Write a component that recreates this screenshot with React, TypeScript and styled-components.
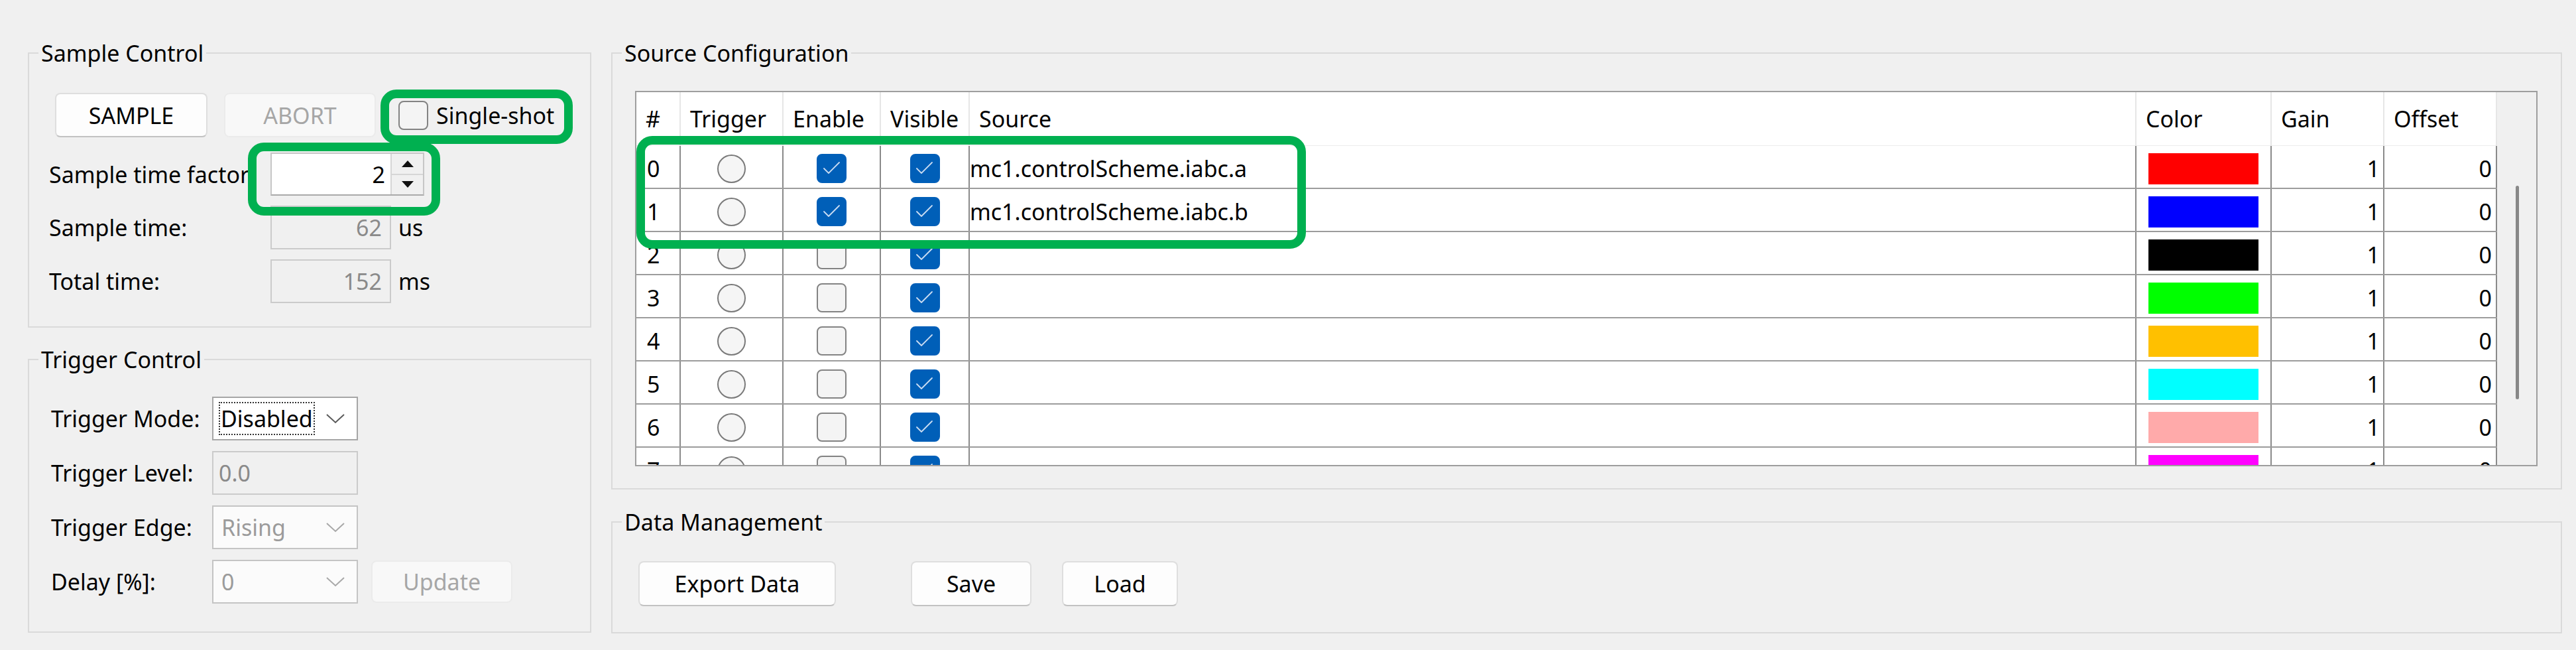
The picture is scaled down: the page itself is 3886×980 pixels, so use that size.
import React from 'react';
import styled, { createGlobalStyle, css } from 'styled-components';

const GlobalStyle = createGlobalStyle`
  html, body { margin: 0; padding: 0; background: #f0f0f0; }
  body {
    font-family: "Noto Sans", "Open Sans", sans-serif;
    font-size: 34px;
    color: #000;
    overflow: hidden;
  }
  * { box-sizing: border-box; }
`;

const Page = styled.div`
  position: relative;
  width: 3886px;
  height: 980px;
  display: flex;
  align-items: flex-start;
  gap: 30px;
  padding: 60px 21px 0 42px;
  background: #f0f0f0;
`;

const Column = styled.div<{ $width: number; $gap: number }>`
  width: ${p => p.$width}px;
  display: flex;
  flex-direction: column;
  gap: ${p => p.$gap}px;
  flex: none;
`;

const Group = styled.fieldset<{ $height: number; $top: number }>`
  margin: 0;
  min-width: 0;
  height: ${p => p.$height}px;
  border: 2px solid #dadada;
  padding: ${p => p.$top}px 0 0 0;
`;

const GroupBody = styled.div<{ $indent: number }>`
  padding-left: ${p => p.$indent}px;
`;

const Legend = styled.legend`
  margin-left: 14px;
  padding: 0 4px;
  font-size: 34px;
  line-height: 40px;
  color: #000;
`;

/* ---------- buttons ---------- */
const PushButton = styled.button<{ $w: number; $h?: number; $after?: number }>`
  width: ${p => p.$w}px;
  height: ${p => p.$h ?? 67}px;
  margin-right: ${p => p.$after ?? 0}px;
  flex: none;
  font-family: inherit;
  font-size: 34px;
  color: #000;
  background: #fdfdfd;
  border: 2px solid #dedede;
  border-bottom-color: #c2c2c2;
  border-radius: 8px;
  padding: 0;
  &:disabled {
    color: #a6a6a6;
    background: #f8f8f8;
    border-color: #ebebeb;
  }
`;

const ButtonRow = styled.div<{ $gap: number; $indent: number }>`
  display: flex;
  align-items: center;
  gap: ${p => p.$gap}px;
  padding-left: ${p => p.$indent}px;
`;

const CheckLabel = styled.label`
  display: flex;
  align-items: center;
  gap: 12px;
  margin-left: 9px;
`;

const Box = styled.span<{ $checked?: boolean }>`
  width: 45px;
  height: 44px;
  flex: none;
  border-radius: 8px;
  display: flex;
  align-items: center;
  justify-content: center;
  ${p =>
    p.$checked
      ? css`
          background: #005fb8;
          border: 2px solid #005fb8;
        `
      : css`
          background: #f4f4f4;
          border: 2px solid #838383;
        `}
`;

const Radio = styled.span`
  width: 43px;
  height: 43px;
  border-radius: 50%;
  border: 2px solid #7a7a7a;
  background: #f5f5f5;
`;

/* ---------- form rows ---------- */
const FormGrid = styled.div<{ $label: number; $gap: number; $top: number }>`
  display: grid;
  grid-template-columns: ${p => p.$label}px max-content;
  row-gap: ${p => p.$gap}px;
  align-items: center;
  margin-top: ${p => p.$top}px;
`;

const Label = styled.span`
  white-space: nowrap;
  line-height: 40px;
`;

const ControlCell = styled.div`
  display: flex;
  align-items: center;
`;

const Unit = styled.span`
  margin-left: 11px;
`;

const SpinBox = styled.div`
  width: 232px;
  height: 65px;
  display: flex;
  border: 2px solid #c6c6c6;
  border-bottom-color: #a9a9a9;
  background: #fff;
`;

const SpinValue = styled.div`
  flex: 1;
  display: flex;
  align-items: center;
  justify-content: flex-end;
  padding-right: 8px;
`;

const SpinButtons = styled.div`
  width: 49px;
  display: flex;
  flex-direction: column;
  border-left: 2px solid #d6d6d6;
  background: #f0f0f0;
`;

const SpinHalf = styled.div<{ $top?: boolean }>`
  flex: 1;
  display: flex;
  align-items: center;
  justify-content: center;
  ${p => p.$top && 'border-bottom: 2px solid #d6d6d6;'}
`;

const Field = styled.div<{ $w: number; $align: 'left' | 'right' }>`
  width: ${p => p.$w}px;
  height: 66px;
  display: flex;
  align-items: center;
  justify-content: ${p => (p.$align === 'right' ? 'flex-end' : 'flex-start')};
  padding: 0 ${p => (p.$align === 'right' ? '12px' : '0')} 0 ${p => (p.$align === 'left' ? '8px' : '0')};
  border: 2px solid #cbcbcb;
  background: #f0f0f0;
  color: #8a8a8a;
`;

const Combo = styled.div<{ $disabled?: boolean }>`
  width: 220px;
  height: 66px;
  display: flex;
  align-items: center;
  justify-content: space-between;
  padding: 0 18px 0 10px;
  border: 2px solid ${p => (p.$disabled ? '#c4c4c4' : '#a6a6a6')};
  background: ${p => (p.$disabled ? '#fbfbfb' : '#fff')};
  color: ${p => (p.$disabled ? '#9b9b9b' : '#000')};
`;

const FocusText = styled.span`
  display: flex;
  align-items: center;
  height: 46px;
  padding: 0 1px;
  outline: 2px dotted #333;
  outline-offset: 0;
`;

const PlainText = styled.span`
  padding-left: 2px;
`;

const UpdateWrap = styled.div`
  margin-left: 20px;
`;

/* ---------- table ---------- */
const COLS = '67px 155px 147px 134px 1760px 204px 170px 170px';

const TableFrame = styled.div`
  width: 2870px;
  height: 566px;
  display: flex;
  border: 2px solid #9e9e9e;
  background: #f0f0f0;
`;

const TableMain = styled.div`
  width: 2807px;
  display: flex;
  flex-direction: column;
  overflow: hidden;
`;

const HeaderRow = styled.div`
  display: grid;
  grid-template-columns: ${COLS};
  height: 81px;
  flex: none;
  background: #fff;
  border-bottom: 1px solid #ededed;
`;

const HeaderCell = styled.div`
  display: flex;
  align-items: center;
  padding-left: 14px;
  border-right: 2px solid #e6e6e6;
  white-space: nowrap;
`;

const Body = styled.div`
  flex: 1;
  overflow: hidden;
  background: #fff;
`;

const Row = styled.div`
  display: grid;
  grid-template-columns: ${COLS};
  height: 65px;
  border-bottom: 2px solid #9c9c9c;
`;

const Cell = styled.div<{ $justify?: string; $pad?: string }>`
  display: flex;
  align-items: center;
  justify-content: ${p => p.$justify ?? 'flex-start'};
  padding: ${p => p.$pad ?? '5px 0 0 0'};
  border-right: 2px solid #8a8a8a;
  white-space: nowrap;
  overflow: hidden;
`;

const Swatch = styled.span<{ $color: string }>`
  width: 166px;
  height: 47px;
  background: ${p => p.$color};
`;

const ScrollTrack = styled.div`
  flex: 1;
  padding: 141px 0 0 28px;
`;

const Thumb = styled.div`
  width: 5px;
  height: 322px;
  border-radius: 3px;
  background: #888;
`;

const Highlight = styled.div<{ $x: number; $y: number; $w: number; $h: number }>`
  position: absolute;
  left: ${p => p.$x}px;
  top: ${p => p.$y}px;
  width: ${p => p.$w}px;
  height: ${p => p.$h}px;
  border: 13px solid #00b050;
  border-radius: 24px;
  pointer-events: none;
`;

const Check = () => (
  <svg width="34" height="28" viewBox="0 0 34 28">
    <polyline points="5,14 12,21 28,5" fill="none" stroke="#c9dcf2" strokeWidth="1.8" strokeLinecap="round" strokeLinejoin="round" />
  </svg>
);

const Chevron = ({ color }: { color: string }) => (
  <svg width="28" height="15" viewBox="0 0 28 15">
    <polyline points="1,1 14,13 27,1" fill="none" stroke={color} strokeWidth="2" />
  </svg>
);

const Arrow = ({ up }: { up?: boolean }) => (
  <svg width="18" height="10" viewBox="0 0 18 10">
    <polygon points={up ? '9,0 18,10 0,10' : '0,0 18,0 9,10'} fill="#111" />
  </svg>
);

type Src = { n: number; enable: boolean; visible: boolean; source: string; color: string };

const sources: Src[] = [
  { n: 0, enable: true, visible: true, source: 'mc1.controlScheme.iabc.a', color: '#ff0000' },
  { n: 1, enable: true, visible: true, source: 'mc1.controlScheme.iabc.b', color: '#0000ff' },
  { n: 2, enable: false, visible: true, source: '', color: '#000000' },
  { n: 3, enable: false, visible: true, source: '', color: '#00ff00' },
  { n: 4, enable: false, visible: true, source: '', color: '#ffc000' },
  { n: 5, enable: false, visible: true, source: '', color: '#00ffff' },
  { n: 6, enable: false, visible: true, source: '', color: '#ffaaaa' },
  { n: 7, enable: false, visible: true, source: '', color: '#ff00ff' },
];

const headers = ['#', 'Trigger', 'Enable', 'Visible', 'Source', 'Color', 'Gain', 'Offset'];

const CheckBox = ({ checked }: { checked: boolean }) => (
  <Box $checked={checked}>{checked && <Check />}</Box>
);

export default function App() {
  return (
    <>
      <GlobalStyle />
      <Page>
        <Column $width={850} $gap={28}>
          <Group $height={434} $top={40}>
            <Legend>Sample Control</Legend>
            <GroupBody $indent={30}>
              <ButtonRow $gap={25} $indent={9}>
                <PushButton $w={230}>SAMPLE</PushButton>
                <PushButton $w={229} disabled>ABORT</PushButton>
                <CheckLabel>
                  <CheckBox checked={false} />
                  <span>Single-shot</span>
                </CheckLabel>
              </ButtonRow>
              <FormGrid $label={334} $gap={15} $top={23}>
                <Label>Sample time factor</Label>
                <ControlCell>
                  <SpinBox>
                    <SpinValue>2</SpinValue>
                    <SpinButtons>
                      <SpinHalf $top>
                        <Arrow up />
                      </SpinHalf>
                      <SpinHalf>
                        <Arrow />
                      </SpinHalf>
                    </SpinButtons>
                  </SpinBox>
                </ControlCell>
                <Label>Sample time:</Label>
                <ControlCell>
                  <Field $w={182} $align="right">62</Field>
                  <Unit>us</Unit>
                </ControlCell>
                <Label>Total time:</Label>
                <ControlCell>
                  <Field $w={182} $align="right">152</Field>
                  <Unit>ms</Unit>
                </ControlCell>
              </FormGrid>
            </GroupBody>
          </Group>
          <Group $height={432} $top={36}>
            <Legend>Trigger Control</Legend>
            <GroupBody $indent={33}>
              <FormGrid $label={243} $gap={16} $top={0}>
                <Label>Trigger Mode:</Label>
                <ControlCell>
                  <Combo>
                    <FocusText>Disabled</FocusText>
                    <Chevron color="#5a5a5a" />
                  </Combo>
                </ControlCell>
                <Label>Trigger Level:</Label>
                <ControlCell>
                  <Field $w={220} $align="left">0.0</Field>
                </ControlCell>
                <Label>Trigger Edge:</Label>
                <ControlCell>
                  <Combo $disabled>
                    <PlainText>Rising</PlainText>
                    <Chevron color="#a8a8a8" />
                  </Combo>
                </ControlCell>
                <Label>Delay [%]:</Label>
                <ControlCell>
                  <Combo $disabled>
                    <PlainText>0</PlainText>
                    <Chevron color="#a8a8a8" />
                  </Combo>
                  <UpdateWrap>
                    <PushButton $w={213} $h={64} disabled>Update</PushButton>
                  </UpdateWrap>
                </ControlCell>
              </FormGrid>
            </GroupBody>
          </Group>
        </Column>

        <Column $width={2943} $gap={29}>
          <Group $height={678} $top={37}>
            <Legend>Source Configuration</Legend>
            <GroupBody $indent={34}>
              <TableFrame>
                <TableMain>
                  <HeaderRow>
                    {headers.map(h => (
                      <HeaderCell key={h}>{h}</HeaderCell>
                    ))}
                  </HeaderRow>
                  <Body>
                    {sources.map(s => (
                      <Row key={s.n}>
                        <Cell $pad="5px 0 0 16px">{s.n}</Cell>
                        <Cell $justify="center">
                          <Radio />
                        </Cell>
                        <Cell $justify="center">
                          <CheckBox checked={s.enable} />
                        </Cell>
                        <Cell $justify="center">
                          <CheckBox checked={s.visible} />
                        </Cell>
                        <Cell $pad="5px 0 0 0">{s.source}</Cell>
                        <Cell $justify="center">
                          <Swatch $color={s.color} />
                        </Cell>
                        <Cell $justify="flex-end" $pad="5px 5px 0 0">1</Cell>
                        <Cell $justify="flex-end" $pad="5px 6px 0 0">0</Cell>
                      </Row>
                    ))}
                  </Body>
                </TableMain>
                <ScrollTrack>
                  <Thumb />
                </ScrollTrack>
              </TableFrame>
            </GroupBody>
          </Group>
          <Group $height={188} $top={39}>
            <Legend>Data Management</Legend>
            <GroupBody $indent={39}>
              <ButtonRow $gap={46} $indent={0}>
                <PushButton $w={298} $h={68} $after={67}>Export Data</PushButton>
                <PushButton $w={182} $h={68}>Save</PushButton>
                <PushButton $w={175} $h={68}>Load</PushButton>
              </ButtonRow>
            </GroupBody>
          </Group>
        </Column>

        <Highlight $x={574} $y={135} $w={290} $h={82} />
        <Highlight $x={374} $y={215} $w={290} $h={110} />
        <Highlight $x={960} $y={205} $w={1010} $h={170} />
      </Page>
    </>
  );
}
